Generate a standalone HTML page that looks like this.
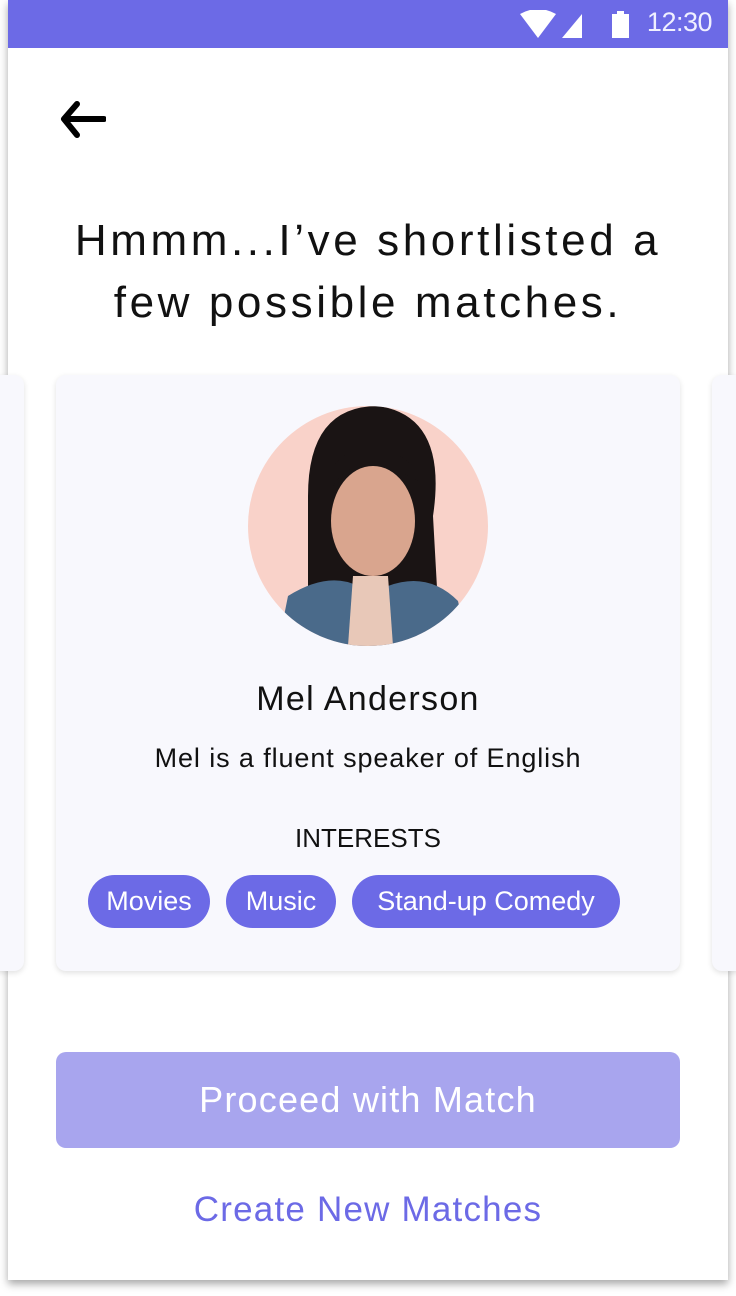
<!DOCTYPE html>
<html><head><style>
html,body{margin:0;padding:0;background:#fff;width:736px;height:1296px;overflow:hidden;font-family:"Liberation Sans",sans-serif}
.phone{position:absolute;left:8px;top:0;width:720px;height:1280px;background:#fff;box-shadow:0 4px 8px rgba(0,0,0,.35)}
.status{position:absolute;left:0;top:0;width:720px;height:48px;background:#6c6ae6}
.time{position:absolute;right:16px;top:7px;color:#f0f0ff;font-size:27px;letter-spacing:-0.5px}
.title{position:absolute;left:0;width:720px;top:210px;text-align:center;font-size:44px;line-height:62px;color:#111;letter-spacing:3.6px}
.card{position:absolute;background:#f8f8fd;border-radius:10px;box-shadow:0 2px 6px rgba(0,0,0,.12)}
.name{position:absolute;left:0;width:624px;top:305px;text-align:center;font-size:34px;color:#111;letter-spacing:1.3px}
.tag{position:absolute;top:875px;height:53px;line-height:53px;background:#6c6ae6;color:#fff;border-radius:27px;font-size:27px;text-align:center}
</style></head><body>
<div class="phone">
<div class="status">
<svg style="position:absolute;left:512px;top:10px" width="110" height="30">
<path d="M0 4 Q18 -6 36 4 L18 28 Z" fill="#fff"/>
<path d="M42 28 L62 4 L62 28 Z" fill="#fff"/>
<rect x="92" y="4" width="17" height="24" fill="#fff"/><rect x="97" y="1" width="7" height="4" fill="#fff"/>
</svg>
<div class="time">12:30</div>
</div>
<svg style="position:absolute;left:46px;top:98px" width="52" height="44"><path d="M50 21 H10 M23 6 L10 21 L23 37" stroke="#000" stroke-width="6" fill="none" stroke-linecap="round" stroke-linejoin="round"/></svg>
<div class="title">Hmmm...I’ve shortlisted a<br>few possible matches.</div>
</div>
<div class="card" style="left:-20px;top:375px;width:44px;height:596px"></div>
<div class="card" style="left:712px;top:375px;width:44px;height:596px"></div>
<div class="card" style="left:56px;top:375px;width:624px;height:596px">
<svg style="position:absolute;left:192px;top:31px" width="240" height="240">
<defs><clipPath id="c"><circle cx="120" cy="120" r="120"/></clipPath></defs>
<g clip-path="url(#c)">
<rect width="240" height="240" fill="#f9d2c9"/>
<path d="M60 90 Q60 0 130 0 Q200 10 185 110 L190 200 L60 200 Z" fill="#1a1414"/>
<ellipse cx="125" cy="115" rx="42" ry="55" fill="#d9a58e"/>
<path d="M85 80 Q110 40 170 75 L165 60 Q120 20 85 60 Z" fill="#1a1414"/>
<path d="M30 240 L40 190 Q80 165 110 180 L140 180 Q180 165 210 195 L220 240 Z" fill="#4a6a8a"/>
<path d="M105 170 L140 170 L145 240 L100 240 Z" fill="#e8c8b8"/>
</g></svg>
<div class="name">Mel Anderson</div>
<div style="position:absolute;left:0;width:624px;top:368px;text-align:center;font-size:27px;color:#111;letter-spacing:0.9px">Mel is a fluent speaker of English</div>
<div style="position:absolute;left:0;width:624px;top:448px;text-align:center;font-size:26px;color:#111">INTERESTS</div>
</div>
<div style="position:absolute;left:0;top:0">
<div class="tag" style="left:88px;width:122px">Movies</div>
<div class="tag" style="left:226px;width:110px">Music</div>
<div class="tag" style="left:352px;width:268px">Stand-up Comedy</div>
</div>
<div style="position:absolute;left:56px;top:1052px;width:624px;height:96px;background:#a8a5ee;border-radius:10px;color:#fff;font-size:36px;line-height:96px;text-align:center;letter-spacing:1.2px">Proceed with Match</div>
<div style="position:absolute;left:0;width:736px;top:1190px;text-align:center;font-size:35px;color:#6c6ae6;letter-spacing:1.2px">Create New Matches</div>
</body></html>
